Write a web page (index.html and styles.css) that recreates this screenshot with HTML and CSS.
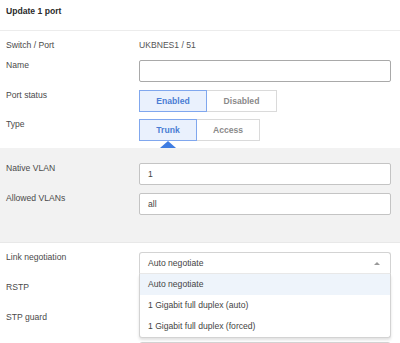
FILE: index.html
```html
<!DOCTYPE html>
<html lang="en">
<head>
<meta charset="utf-8">
<title>Update 1 port</title>
<link rel="stylesheet" href="styles.css">
</head>
<body>
<div class="page">
  <header class="hdr">Update 1 port</header>

  <section class="sec sec-top">
    <div class="row row-text">
      <div class="lbl">Switch / Port</div>
      <div class="val">UKBNES1 / 51</div>
    </div>
    <div class="row">
      <div class="lbl">Name</div>
      <div class="inp inp-dark"></div>
    </div>
    <div class="row">
      <div class="lbl">Port status</div>
      <div class="seg">
        <div class="seg-btn on w-enabled">Enabled</div>
        <div class="seg-btn w-disabled">Disabled</div>
      </div>
    </div>
    <div class="row row-type">
      <div class="lbl">Type</div>
      <div class="seg">
        <div class="seg-btn on w-trunk pointer">Trunk</div>
        <div class="seg-btn w-access">Access</div>
      </div>
    </div>
  </section>

  <section class="sec sec-gray">
    <div class="row">
      <div class="lbl">Native VLAN</div>
      <div class="inp">1</div>
    </div>
    <div class="row">
      <div class="lbl">Allowed VLANs</div>
      <div class="inp">all</div>
    </div>
  </section>

  <section class="sec sec-bottom">
    <div class="row">
      <div class="lbl">Link negotiation</div>
      <div class="select-wrap">
        <div class="select open">
          <span>Auto negotiate</span>
          <span class="caret"></span>
        </div>
        <div class="menu">
          <div class="opt active">Auto negotiate</div>
          <div class="opt">1 Gigabit full duplex (auto)</div>
          <div class="opt">1 Gigabit full duplex (forced)</div>
        </div>
      </div>
    </div>
    <div class="row">
      <div class="lbl">RSTP</div>
      <div class="select"></div>
    </div>
    <div class="row">
      <div class="lbl">STP guard</div>
      <div class="select"></div>
    </div>
    <div class="row">
      <div class="lbl"></div>
      <div class="select"></div>
    </div>
  </section>
</div>
</body>
</html>
```

FILE: styles.css
```css
* { box-sizing: border-box; }

html, body {
  margin: 0;
  padding: 0;
  background: #ffffff;
}

body {
  font-family: "Liberation Sans", Arial, sans-serif;
  font-size: 8.6px;
  color: #4a4a4a;
  overflow: hidden;
}

.page {
  width: 400px;
  height: 343px;
  overflow: hidden;
}

.hdr {
  height: 31px;
  padding: 6px 6px 0;
  line-height: 11px;
  font-weight: bold;
  font-size: 8.6px;
  color: #2a2a2a;
  border-bottom: 1px solid #ececec;
}

.sec {
  display: flex;
  flex-direction: column;
  gap: 8px;
}

.sec-top {
  padding: 9px 0 7px;
}

.sec-gray {
  background: #f2f2f2;
  padding: 15px 0 27px;
  border-bottom: 1px solid #e8e8e8;
}

.sec-bottom {
  padding: 9px 0 0;
}

.row {
  display: grid;
  grid-template-columns: 133px 252px;
  padding-left: 6px;
  align-items: start;
}

.row-text {
  min-height: 12px;
}

.row-type {
  margin-top: -1px;
}

.lbl {
  line-height: 11px;
  color: #4a4a4a;
}

.val {
  line-height: 11px;
  color: #555;
}

.inp {
  height: 22px;
  border: 1px solid #c4c4c4;
  border-radius: 2px;
  background: #fff;
  padding-left: 8px;
  line-height: 20px;
  color: #444;
}

.inp-dark {
  border-color: #a9a9a9;
}

.seg {
  display: flex;
}

.seg-btn {
  height: 22px;
  line-height: 20px;
  text-align: center;
  font-weight: bold;
  color: #8a8a8a;
  border: 1px solid #dadada;
  background: #fff;
  position: relative;
}

.seg-btn + .seg-btn {
  border-left: none;
}

.seg-btn.on {
  color: #4a7dd4;
  background: #eaf1fd;
  border-color: #80a7ee;
}

.w-enabled { width: 68px; }
.w-disabled { width: 70px; }
.w-trunk { width: 58px; }
.w-access { width: 63px; }

.pointer::after {
  content: "";
  position: absolute;
  left: 50%;
  bottom: -8px;
  margin-left: -8px;
  border-left: 8px solid transparent;
  border-right: 8px solid transparent;
  border-bottom: 7px solid #3f7de2;
}

.select-wrap {
  position: relative;
}

.select {
  height: 22px;
  border: 1px solid #d3d3d3;
  border-radius: 3px;
  background: #fff;
  padding: 0 8px;
  line-height: 20px;
  color: #444;
  display: flex;
  justify-content: space-between;
  align-items: center;
}

.select.open {
  border-bottom-color: #e9e9e9;
  border-radius: 3px 3px 0 0;
}

.caret {
  width: 0;
  height: 0;
  margin-right: 2px;
  border-left: 3px solid transparent;
  border-right: 3px solid transparent;
  border-bottom: 3px solid #999;
}

.menu {
  position: absolute;
  top: 100%;
  left: 0;
  right: 0;
  z-index: 5;
  background: #fff;
  border: 1px solid #d3d3d3;
  border-top: none;
  border-radius: 0 0 3px 3px;
  box-shadow: 0 2px 3px rgba(0, 0, 0, 0.12);
}

.opt {
  height: 21px;
  line-height: 21px;
  padding-left: 8px;
  color: #444;
}

.opt.active {
  background: #eef4fb;
}
```
